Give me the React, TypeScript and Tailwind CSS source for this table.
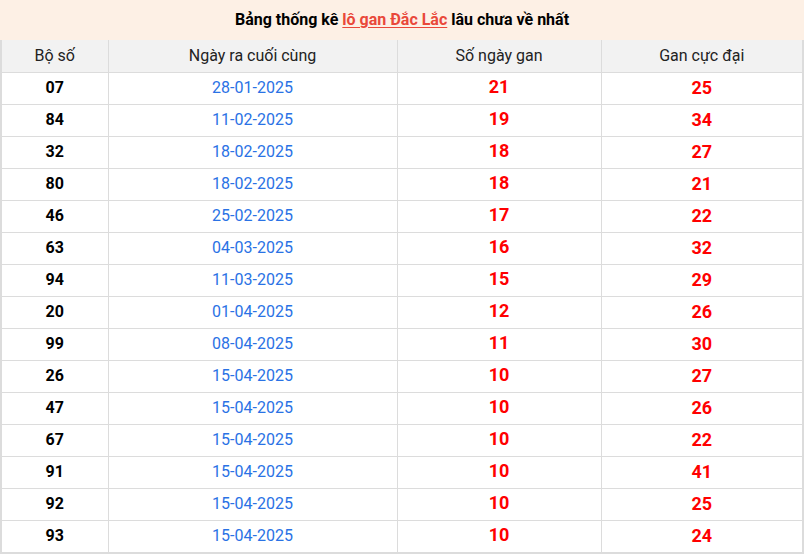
import React from "react";

const rows: [string, string, string, string][] = [
  ["07", "28-01-2025", "21", "25"],
  ["84", "11-02-2025", "19", "34"],
  ["32", "18-02-2025", "18", "27"],
  ["80", "18-02-2025", "18", "21"],
  ["46", "25-02-2025", "17", "22"],
  ["63", "04-03-2025", "16", "32"],
  ["94", "11-03-2025", "15", "29"],
  ["20", "01-04-2025", "12", "26"],
  ["99", "08-04-2025", "11", "30"],
  ["26", "15-04-2025", "10", "27"],
  ["47", "15-04-2025", "10", "26"],
  ["67", "15-04-2025", "10", "22"],
  ["91", "15-04-2025", "10", "41"],
  ["92", "15-04-2025", "10", "25"],
  ["93", "15-04-2025", "10", "24"],
];

export default function App() {
  return (
    <div className="w-[808px] h-[554px] bg-white" style={{ fontFamily: "Roboto, 'Noto Sans', sans-serif" }}>
      <div className="w-[804px]">
        <div className="h-[40px] bg-[#fdf0e5] flex items-center justify-center text-[16px] font-bold text-black">
          <span>
            Bảng thống kê{" "}
            <span className="text-[#e9483a] underline underline-offset-2">lô gan Đắc Lắc</span>{" "}
            lâu chưa về nhất
          </span>
        </div>
        <div className="border-x-2 border-b-2 border-[#dcdcdc]">
          <table className="w-full border-collapse table-fixed text-[16px]">
            <colgroup>
              <col className="w-[106px]" />
              <col className="w-[289px]" />
              <col className="w-[204px]" />
              <col />
            </colgroup>
            <thead>
              <tr className="h-[32px] bg-[#f2f2f2] text-[#222]">
                <th className="font-normal border-r border-b border-[#dcdcdc] p-0">Bộ số</th>
                <th className="font-normal border-r border-b border-[#dcdcdc] p-0">Ngày ra cuối cùng</th>
                <th className="font-normal border-r border-b border-[#dcdcdc] p-0">Số ngày gan</th>
                <th className="font-normal border-b border-[#dcdcdc] p-0">Gan cực đại</th>
              </tr>
            </thead>
            <tbody>
              {rows.map((r, i) => (
                <tr key={i} className="h-[32px]">
                  <td className={`text-center font-bold text-black border-r border-[#dcdcdc] p-0 ${i < rows.length - 1 ? "border-b" : ""}`}>{r[0]}</td>
                  <td className={`text-center text-[#2a72e5] border-r border-[#dcdcdc] p-0 ${i < rows.length - 1 ? "border-b" : ""}`}>{r[1]}</td>
                  <td className={`text-center font-bold text-[18px] leading-none pb-[3px] text-[#ff0000] border-r border-[#dcdcdc] ${i < rows.length - 1 ? "border-b" : ""}`}>{r[2]}</td>
                  <td className={`text-center font-bold text-[18px] leading-none pb-[1px] text-[#ff0000] border-[#dcdcdc] ${i < rows.length - 1 ? "border-b" : ""}`}>{r[3]}</td>
                </tr>
              ))}
            </tbody>
          </table>
        </div>
      </div>
    </div>
  );
}
